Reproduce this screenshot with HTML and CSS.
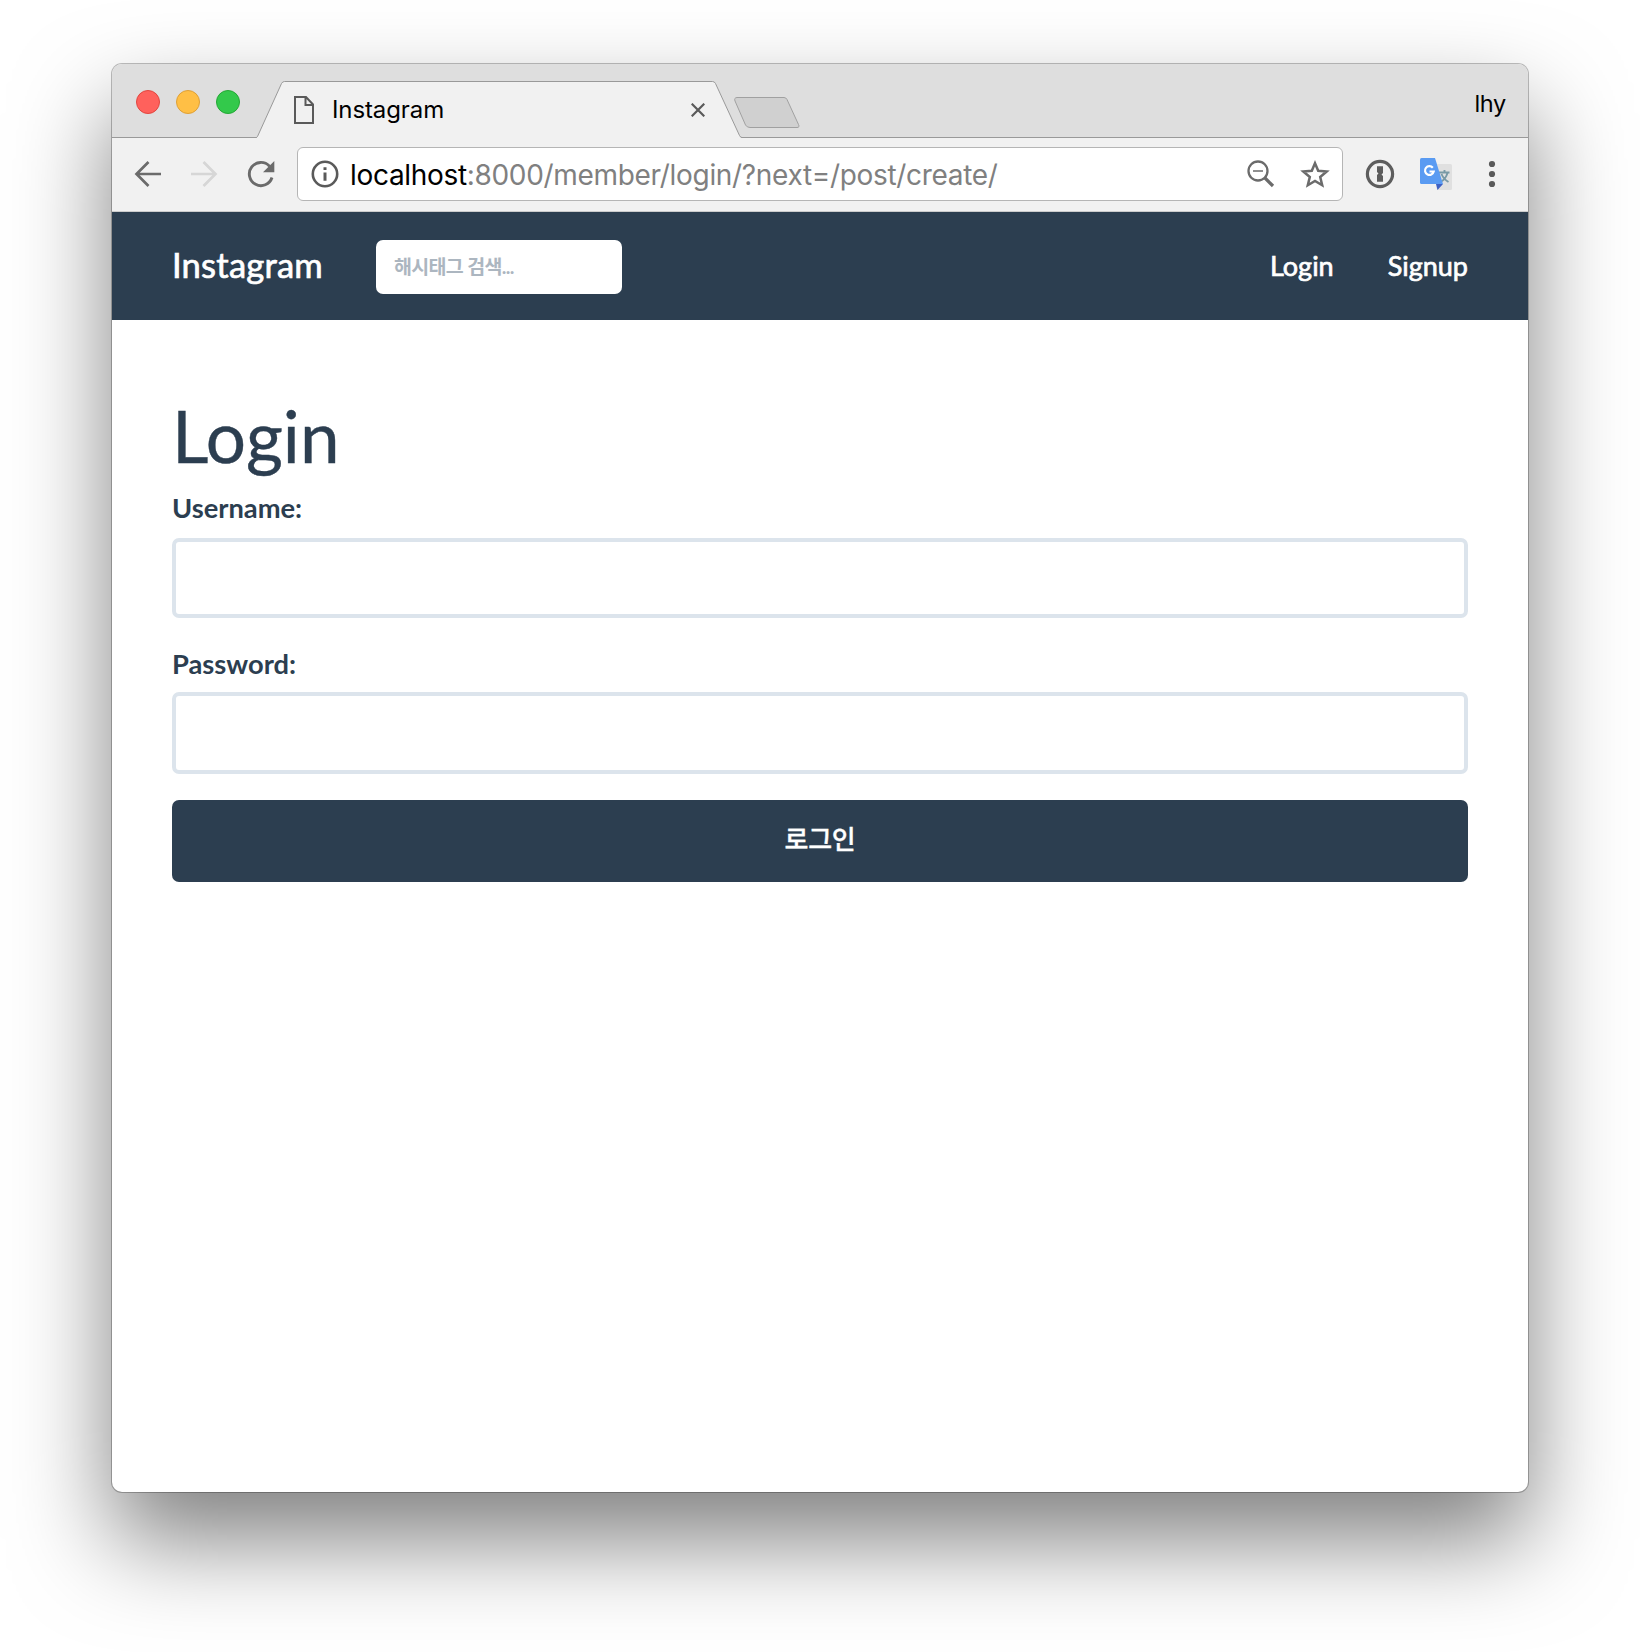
FILE: index.html
```html
<!DOCTYPE html>
<html lang="ko">
<head>
<meta charset="utf-8">
<title>Instagram</title>
<link rel="stylesheet" href="styles.css">
</head>
<body>
<div class="window">
  <div class="tabstrip">
    <div class="lights"><span class="light red"></span><span class="light yellow"></span><span class="light green"></span></div>
    <div class="tab">
      <svg class="tab-shape" width="486" height="57" viewBox="0 0 486 57"><path d="M0 57 Q1 56.5 1.5 55.5L25.5 2.5Q26.5 .5 28.5 .5H456.500Q458.500 .5 459.500 2.500L483.500 54.500Q484.500 56.500 486 57Z" fill="#f1f1f1"/><path d="M0 56.500Q1 56.500 1.500 55.500L25.500 2.500Q26.500 .5 28.500 .5H456.500Q458.500 .5 459.500 2.500L483.500 54.500Q484.500 56.500 486 56.500" fill="none" stroke="#999"/></svg>
      <svg class="doc" width="20" height="28" viewBox="0 0 20 28" fill="none" stroke="#5a5a5a" stroke-width="2"><path d="M1 1H12L19 8.500V27H1ZM11.500 1V9H19"/></svg>
      <span class="tab-title">Instagram</span>
      <svg class="close" width="14" height="14" viewBox="0 0 14 14" stroke="#5a5a5a" stroke-width="2.200"><path d="M.7.7 13.300 13.300M13.300.7.7 13.300"/></svg>
    </div>
    <svg class="newtab" width="66" height="32" viewBox="0 0 66 32"><path d="M3 .5H50Q52 .5 53 2.500L64.500 27.500Q66 30.500 63 30.500H16Q13 30.500 11.500 28L1 4Q-.2 .8 3 .5Z" fill="#d0d0d0" stroke="#a0a0a0"/></svg>
    <span class="profile">lhy</span>
  </div>
  <div class="toolbar">
    <svg class="back" width="28" height="28" viewBox="0 0 28 28" fill="none" stroke="#6b6b6b" stroke-width="2.700"><path d="M27 14H3M14.500 2 2.500 14 14.500 26"/></svg>
    <svg class="forward" width="28" height="28" viewBox="0 0 28 28" fill="none" stroke="#d6d6d6" stroke-width="2.700"><path d="M1 14H25M13.500 2 25.500 14 13.500 26"/></svg>
    <svg class="reload" width="28" height="28" viewBox="0 0 28 28"><path d="M22.500 6.200A11.600 11.600 0 1 0 25 17.500" fill="none" stroke="#6b6b6b" stroke-width="2.900"/><path d="M27.300 1V12.300H16Z" fill="#6b6b6b"/></svg>
    <div class="omnibox">
      <svg width="28" height="28" viewBox="0 0 28 28"><circle cx="14" cy="14" r="12.200" fill="none" stroke="#5a5a5a" stroke-width="2.600"/><path d="M12.500 7.300h3v2.800h-3zM12.500 12.500h3v8.200h-3z" fill="#5a5a5a"/></svg>
      <span class="url">localhost<span class="path">:8000/member/login/?next=/post/create/</span></span>
      <svg class="zoom" width="28" height="28" viewBox="0 0 28 28" fill="none" stroke="#6b6b6b"><circle cx="11" cy="11" r="9.500" stroke-width="2.300"/><path d="M6 11H16" stroke-width="1.700"/><path d="M17.500 17.500 26 26" stroke-width="3.200"/></svg>
      <svg class="star" width="30" height="28" viewBox="0 0 30 28"><path d="M15 3.200 18.200 10.800 26.700 11.500 20.200 17 22.200 25.200 15 20.900 7.800 25.200 9.800 17 3.300 11.500 11.800 10.800Z" fill="none" stroke="#6b6b6b" stroke-width="2.500"/></svg>
    </div>
    <svg class="onepass" width="30" height="30" viewBox="0 0 30 30"><circle cx="15" cy="15" r="12.600" fill="none" stroke="#5d5d5d" stroke-width="3.200"/><path d="M12 7.300H18V14L16.500 15.500 18 17V22.700H12V16L13.500 14.500 12 13Z" fill="#5d5d5d"/></svg>
    <svg class="translate" width="32" height="32" viewBox="0 0 32 32"><path d="M14 6H30.500Q32 6 32 7.500V30.500Q32 32 30.500 32H17Z" fill="#e0e0e0"/><path d="M19 14.500H29.500M24.500 12V14.500M27.500 15Q25.500 21.500 20.500 24M21.500 16Q23.500 21 28.500 24" fill="none" stroke="#7899a6" stroke-width="1.900"/><path d="M16 26H23L17.500 32Z" fill="#3e61c4"/><path d="M1.500 0H15L23 26H1.500Q0 26 0 24.500V1.500Q0 0 1.500 0Z" fill="#5a9bf2"/><path d="M12.800 9.700A4.400 4.400 0 1 0 13.700 13.500H9.500" fill="none" stroke="#fff" stroke-width="2.200"/></svg>
    <svg class="menu" width="8" height="28" viewBox="0 0 8 28" fill="#5a5a5a"><circle cx="4" cy="4" r="3.100"/><circle cx="4" cy="14" r="3.100"/><circle cx="4" cy="24" r="3.100"/></svg>
  </div>
  <nav class="navbar">
    <a class="brand">Instagram</a>
    <input class="search" type="text" placeholder="해시태그 검색...">
    <a class="link login">Login</a>
    <a class="link signup">Signup</a>
  </nav>
  <main class="content">
    <h1 class="heading">Login</h1>
    <form class="form">
      <label class="label" for="username">Username:</label>
      <input class="field" id="username" type="text">
      <label class="label second" for="password">Password:</label>
      <input class="field tall" id="password" type="password">
      <button class="submit" type="button">로그인</button>
    </form>
  </main>
</div>
</body>
</html>
```
FILE: styles.css
```css
* { box-sizing: border-box; }
body { margin: 0; height: 1652px; padding: 64px 112px 0; background: #fff; overflow: hidden; }
svg { display: block; flex: none; }
.window {
  width: 1416px; height: 1428px; border-radius: 10px; overflow: hidden; background: #fff;
  display: flex; flex-direction: column;
  box-shadow: 0 0 0 1px rgba(0,0,0,.25), 0 48px 96px rgba(0,0,0,.5);
}
.tabstrip {
  height: 74px; flex: none; display: flex; align-items: flex-start; background: #dedede;
  border-bottom: 1px solid #999; font-family: Inter, sans-serif; color: #000;
}
.lights { display: flex; gap: 16px; padding: 26px 0 0 24px; width: 144px; }
.light { width: 24px; height: 24px; border-radius: 50%; border: 1px solid; }
.red { background: #ff615c; border-color: #e2463f; }
.yellow { background: #ffbf45; border-color: #dfa036; }
.green { background: #33c94b; border-color: #24a835; }
.tab { position: relative; width: 486px; height: 57px; margin-top: 17px; display: flex; align-items: center; padding: 0 37px 0 38px; }
.tab-shape { position: absolute; left: 0; top: 0; }
.doc, .tab-title, .close { position: relative; }
.tab-title { margin-left: 18px; font-size: 24px; letter-spacing: -.1px; flex: 1; line-height: 30px; }
.newtab { margin: 33px 0 0 -8px; }
.profile { margin: 25px 22px 0 auto; font-size: 23.500px; line-height: 30px; letter-spacing: -.3px; }
.toolbar { height: 74px; flex: none; display: flex; align-items: center; background: #f1f1f1; border-bottom: 1px solid #ccc; padding: 0 0 2px 22px; }
.forward { margin-left: 28px; }
.reload { margin-left: 29px; }
.omnibox {
  width: 1046px; height: 54px; margin: 0 0 0 22px; display: flex; align-items: center; background: #fff;
  border: 1px solid #b5b5b5; border-radius: 6px; padding: 0 12px 0 13px; font-family: Inter, sans-serif; font-size: 28px;
}
.url { margin: 2px 0 0 11px; flex: 1; white-space: nowrap; letter-spacing: -.32px; }
.path { color: #808080; }
.star { margin-left: 25px; }
.onepass { margin-left: 22px; }
.translate { margin-left: 25px; }
.menu { margin-left: 36px; }
.navbar { height: 108px; flex: none; display: flex; align-items: center; background: #2c3e50; padding: 0 60px; font-family: Lato, sans-serif; color: #fff; }
.brand { font-size: 34.600px; letter-spacing: .2px; width: 204px; margin-top: -4px; -webkit-text-stroke: .7px #fff; }
.search {
  width: 246px; height: 54px; border: 0; border-radius: 7px; background: #fff; padding: 0 18px; margin: 1px auto 0 0;
  font: 700 19.500px Lato, "Noto Sans CJK KR", sans-serif; letter-spacing: -.65px;
}
.search::placeholder { color: #acb6c0; opacity: 1; }
.link { font-size: 27px; margin-top: -2px; -webkit-text-stroke: .7px #fff; }
.signup { margin-left: 54px; }
.content { padding: 77px 60px 0; font-family: Lato, sans-serif; color: #2c3e50; }
.heading { margin: 0; font-size: 71px; line-height: 77px; font-weight: 400; -webkit-text-stroke: .4px #2c3e50; }
.form { display: flex; flex-direction: column; }
.label { font-size: 27.300px; font-weight: 700; line-height: 38px; margin-top: 15px; }
.field { height: 80px; border: 4px solid #dce4ec; border-radius: 7px; background: #fff; margin: 11px 0 0; padding: 0 24px; font: 27px Lato, sans-serif; }
.second { margin-top: 27px; }
.tall { height: 82px; margin-top: 9px; }
.submit { height: 82px; margin-top: 26px; border: 0; border-radius: 7px; background: #2c3e50; color: #fff; padding: 0 0 7px; font: 500 26px "Noto Sans CJK KR", sans-serif; letter-spacing: -.3px; -webkit-text-stroke: .3px #fff; }
```
